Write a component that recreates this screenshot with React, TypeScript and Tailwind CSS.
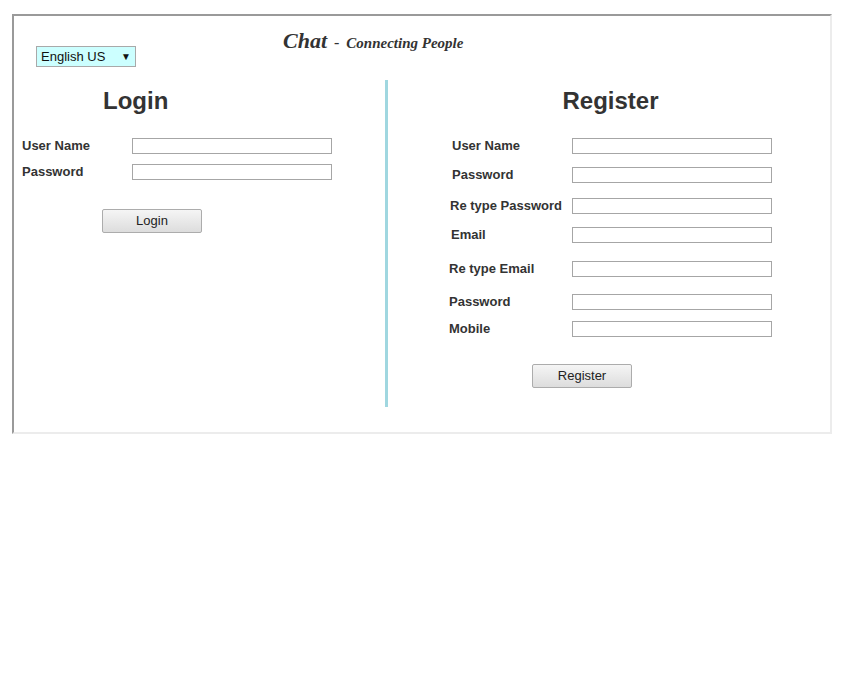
import React from "react";

const Field = ({ label, pl, mt }: { label: string; pl: string; mt: string }) => (
  <div className={`flex h-[16px] items-center ${mt}`}>
    <div className={`w-[184px] ${pl} text-[13px] leading-[16px] font-bold text-[#333]`}>{label}</div>
    <div className="w-[200px] h-[16px] border border-[#a6a6a6] bg-white" />
  </div>
);

const Btn = ({ children, cls }: { children: React.ReactNode; cls: string }) => (
  <div
    className={`w-[100px] h-[24px] border border-[#acacac] rounded-[2px] bg-linear-to-b from-[#f5f5f5] to-[#dddddd] flex items-center justify-center text-[13px] text-[#222] ${cls}`}
  >
    {children}
  </div>
);

export default function App() {
  return (
    <div className="pt-[14px] pl-[12px] font-['Liberation_Sans',Arial,sans-serif] bg-white min-h-[686px]">
      <div className="w-[820px] h-[420px] border-2 border-t-[#9a9a9a] border-l-[#9a9a9a] border-r-[#ececec] border-b-[#ececec] bg-white">
        <div className="flex h-[64px]">
          <div className="ml-[22px] mt-[30px] w-[100px] h-[21px] border border-[#a9a9a9] bg-[#ccffff] flex items-center justify-between pl-[4px] pr-[4px] text-[13px] text-[#111]">
            <span>English US</span>
            <span className="text-[10px]">▼</span>
          </div>
          <div className="ml-[147px] mt-[13px] flex items-baseline leading-[24px] text-[#333] font-['Liberation_Serif',serif] italic">
            <span className="text-[22px] font-bold">Chat</span>
            <span className="text-[16px] ml-[7px]">-</span>
            <span className="text-[15px] font-bold ml-[7px]">Connecting People</span>
          </div>
        </div>
        <div className="flex">
          <div className="w-[371px]">
            <div className="mt-[7px] pl-[89px] text-[24px] leading-[28px] font-bold text-[#333]">Login</div>
            <div className="mt-[23px] flex h-[16px] items-center">
              <div className="w-[118px] pl-[8px] text-[13px] leading-[16px] font-bold text-[#333]">User Name</div>
              <div className="w-[200px] h-[16px] border border-[#a6a6a6] bg-white" />
            </div>
            <div className="mt-[10px] flex h-[16px] items-center">
              <div className="w-[118px] pl-[8px] text-[13px] leading-[16px] font-bold text-[#333]">Password</div>
              <div className="w-[200px] h-[16px] border border-[#a6a6a6] bg-white" />
            </div>
            <Btn cls="mt-[29px] ml-[88px]">Login</Btn>
          </div>
          <div className="w-[3px] h-[327px] bg-[#a0d7e0]" />
          <div className="flex-1">
            <div className="mt-[7px] pl-[3px] text-center text-[24px] leading-[28px] font-bold text-[#333]">Register</div>
            <Field label="User Name" pl="pl-[64px]" mt="mt-[23px]" />
            <Field label="Password" pl="pl-[64px]" mt="mt-[13px]" />
            <Field label="Re type Password" pl="pl-[62px]" mt="mt-[15px]" />
            <Field label="Email" pl="pl-[63px]" mt="mt-[13px]" />
            <Field label="Re type Email" pl="pl-[61px]" mt="mt-[18px]" />
            <Field label="Password" pl="pl-[61px]" mt="mt-[17px]" />
            <Field label="Mobile" pl="pl-[61px]" mt="mt-[11px]" />
            <Btn cls="mt-[27px] ml-[144px]">Register</Btn>
          </div>
        </div>
      </div>
    </div>
  );
}
